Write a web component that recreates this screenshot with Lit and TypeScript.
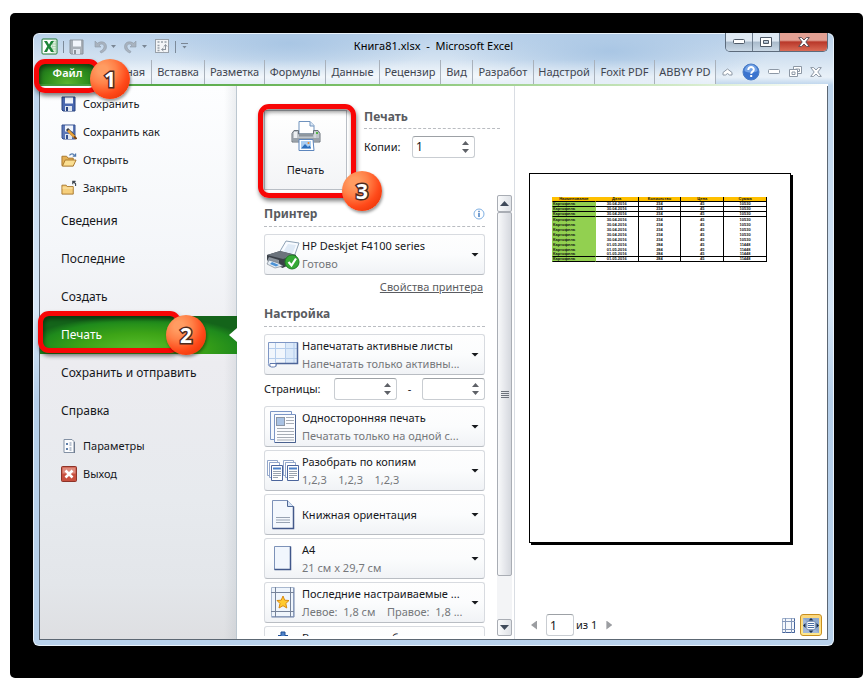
import { LitElement, html, css, svg, nothing } from "lit";
import { customElement, property } from "lit/decorators.js";
import { classMap } from "lit/directives/class-map.js";

const page = (w: number, h: number, inner: unknown) => html`<svg
  width=${w} height=${h} viewBox="0 0 ${w} ${h}" aria-hidden="true">${inner}</svg>`;

const floppy = (dim: string, dark: string) => svg`
  <path d="M1 1h13v14H2l-1-1z" fill=${dim} stroke=${dark}/>
  <rect x="4" y="1.500" width="8" height="6" fill="#f2f6fc"/>
  <rect x="4" y="10" width="7" height="5" fill="#dfe6ef"/>
  <rect x="5" y="11" width="2" height="4" fill=${dark}/>`;

const icons = {
  excel: page(17, 17, svg`
    <rect x="1" y="1" width="15" height="15" rx="1" fill="#fff" stroke="#1e7a35"/>
    <path d="M11 3h4v11h-4z" fill="#dff0df" stroke="#8fc295" stroke-width=".6"/>
    <path d="M11 6h4M11 8.500h4M11 11h4" stroke="#8fc295" stroke-width=".6"/>
    <path d="M3 3h3l2 3.500L10 3h3L9.500 8.300 13 14h-3L7.800 10.300 6 14H3l3.300-5.700z" fill="#1d8538"/>`),
  qSave: page(16, 16, floppy("#a9b0b8", "#8a929b")),
  undo: page(14, 14, svg`<path d="M2 1v6h6L6 5c3-2 5-.6 5 1.600 0 2-1.500 3.600-4 4.800l1 1.600c4-1.500 5.800-4 5.400-7C13 2 8.500.500 4.300 3.300z" fill="#a9b3bf" stroke="#8f9aa7" stroke-width=".6"/>`),
  redo: page(14, 14, svg`<path d="M12 1v6H6l2-2C5 3 3 4.400 3 6.600c0 2 1.500 3.600 4 4.800L6 13C2 11.500.2 9 .6 6 1 2 5.500.500 9.700 3.300z" fill="#a9b3bf" stroke="#8f9aa7" stroke-width=".6"/>`),
  pivot: page(15, 15, svg`
    <rect x=".5" y=".5" width="13" height="13" fill="#f3f5f7" stroke="#98a0a9"/>
    <path d="M2.500 3h2M6 3h2M9.500 3h2M2.500 6.500h2M2.500 9h2M2.500 11.500h2" stroke="#98a0a9" stroke-width="1.500"/>
    <path d="M10.500 10V6M9 7.500 10.500 5.500 12 7.500M7 10.500h4M8.500 9 6.500 10.500 8.500 12" fill="none" stroke="#8c949d"/>`),
  save: page(16, 16, floppy("#4a68b0", "#27427f")),
  saveAs: page(16, 16, svg`${floppy("#5d78b8", "#34508f")}
    <path d="M6 5l7 7" stroke="#2f3742" stroke-width="3"/><path d="M7 6.500l7 7" stroke="#e9a23b" stroke-width="2.500"/><path d="M13 12.500l2.500 2.500" stroke="#7a4412" stroke-width="2"/>`),
  open: page(17, 16, svg`
    <path d="M1 14V4h5l1.500 2H13v8z" fill="#e3b055" stroke="#a8752a"/>
    <path d="M1.500 14.500 4.500 8H16l-3 6.500z" fill="#fbdf92" stroke="#a8752a"/>
    <path d="M9 3c1.500-2 4-2 5.500 0M15.500 1v3h-3" fill="none" stroke="#4d76ab" stroke-width="1.300"/>`),
  close: page(17, 16, svg`
    <path d="M1 14.500V5h4.500l1 1.500H13v8z" fill="#f6cf7c" stroke="#a8752a"/>
    <path d="M1.500 8h11" stroke="#fdeab6"/>
    <path d="M15.500 6V3.500L13 1M12.500 4V1h3" fill="none" stroke="#3d4650" stroke-width="1.200"/>`),
  options: page(16, 16, svg`
    <path d="M3 1.500h8l2 2v11H3z" fill="#fbfcfe" stroke="#8290a3"/><path d="M13.500 4v11" stroke="#6f7d91"/>
    <rect x="5" y="5" width="2" height="2" fill="#5f7ea8"/><rect x="5" y="10" width="2" height="2" fill="#5f7ea8"/>
    <path d="M8.500 5h2M8.500 7h2M8.500 10h2M8.500 12h2" stroke="#7b8ca5"/>`),
  exit: page(16, 16, svg`
    <rect x=".5" y=".5" width="15" height="15" rx="1" fill="#c8503f" stroke="#8d3328"/>
    <rect x="1.500" y="1.500" width="13" height="6" fill="#dd8a7d"/>
    <path d="M4.500 4.500l7 7M11.500 4.500l-7 7" stroke="#fff" stroke-width="2.600"/>`),
  printer: page(32, 32, svg`
    <path d="M9 1.500h11l4 4V14H9z" fill="#fff" stroke="#6f92bd"/><path d="M20 1.500V6h4" fill="#dbe8f6" stroke="#6f92bd"/>
    <path d="M4 10.500h4.500V14h15v-3.500H28l2 3V22H2v-8.500z" fill="#bfc5cb" stroke="#6a727a"/>
    <path d="M4 12h3v8H4z" fill="#eef0f2"/><path d="M24.500 12h1v8h-1z" fill="#e4e7ea"/><path d="M9 14.500h14v2H9z" fill="#8d959d"/>
    <rect x="26" y="12" width="2" height="2" fill="#56b447"/><rect x="2.500" y="18" width="27" height="3" fill="#9aa2aa"/>
    <path d="M9 19.500h14l1 11H9z" fill="#fff" stroke="#5d86bd"/>
    <path d="M11 21h10v7.500H11z" fill="#a9cdf2"/><path d="M11 28.500l4-4.500 3 3 1.500-1.500L21 28v.5z" fill="#2c6fbe"/><circle cx="18.500" cy="23" r="1" fill="#e9862d"/>`),
  device: page(34, 30, svg`
    <path d="M13 13 20 1l13 2-5 14z" fill="#f8fbff" stroke="#8fa2b5"/><path d="M17 12 22 4l8 1-4 10z" fill="#dfeaf6"/>
    <path d="M1 15l13-4 16 4 .5 7-14 6L1 20z" fill="#3b4148"/><path d="M1 15l13-4 16 4-13 4z" fill="#6b737c"/>
    <path d="M3 17l10 3v6L1 21z" fill="#8d959e"/><path d="M3 20l9 3 5 3-8 2-8-4z" fill="#e5edf5" stroke="#69747f" stroke-width=".6"/>
    <path d="M6 22l7 3-3 1.500-6-2.500z" fill="#4b92d6"/>
    <circle cx="26" cy="22" r="7" fill="#35a935" stroke="#1f7f24"/><path d="M22.500 22l3 3.500 4.500-7" fill="none" stroke="#fff" stroke-width="2.200"/>`),
  sheet: page(32, 28, svg`
    <path d="M1.500 1.500h29v21H9v3H4c-2 0-3-1-2.500-3z" fill="#f1f6fc" stroke="#7e96c4"/>
    <path d="M18 2h12v20H18z" fill="#dceafa"/>
    <path d="M8.500 2v20M18.500 2v20M27 2v20M2 7.500h28M2 17.500h28" stroke="#b5cdec"/>
    <path d="M30.500 1.500v21H9" fill="none" stroke="#4d6599" stroke-width="1.500"/>
    <path d="M3 22.500h6v1.500c0 1.500-1 2-2.500 2H4.500C3 26 2.500 24.500 3 22.500z" fill="#fff" stroke="#5f78ad"/>`),
  oneSide: page(28, 34, svg`
    <path d="M1.500 1.500h21v28h-21z" fill="#f6f9fd" stroke="#7c96c5"/>
    <path d="M5.500 4.500h21v28h-21z" fill="#fbfcfe" stroke="#7c96c5"/><path d="M26.500 5v27.500H6" fill="none" stroke="#4b628f"/>
    <rect x="7.500" y="7.500" width="8" height="8" fill="#a9c2e3" stroke="#8a95a5"/>
    <path d="M17 7.500h8M17 10.500h8M17 13.500h8M8 18.500h17M8 21.500h17M8 24.500h17M8 27.500h17M8 30h17" stroke="#a7adb5"/>`),
  collate: page(34, 23, svg`${[0, 16].map((x) => svg`
    <g transform="translate(${x} 0)">
      <path d="M1.500 1.500h10v15h-10z" fill="#fff" stroke="#93a7cb"/><path d="M3 4h7" stroke="#aab"/>
      <path d="M3.500 3.500h10v15h-10z" fill="#fff" stroke="#93a7cb"/>
      <path d="M5.500 6.500h11v15h-11z" fill="#fff" stroke="#4c659c"/>
      <path d="M7 9.500h8" stroke="#4d81c8" stroke-width="2"/><path d="M7 12.500h8M7 14.500h8M7 16.500h8M7 18.500h5" stroke="#9aa3af"/>
    </g>`)}`),
  portrait: page(24, 32, svg`
    <path d="M1.500 1.500h15l6 6v22h-21z" fill="#f4f8fd" stroke="#7d92b8"/><path d="M16.500 1.500v6h6" fill="#d5e3f5" stroke="#4f6896"/>
    <path d="M22.500 7.500V29.500h-21" fill="none" stroke="#43598a" stroke-width="1.500"/>
    <path d="M5 18.500h14M5 21h14M5 23.500h14" stroke="#98a3b2"/>`),
  a4: page(20, 28, svg`<path d="M1.500 1.500h16v23h-16z" fill="#f1f6fd" stroke="#7d92b8"/><path d="M17.500 1.500v23h-16" fill="none" stroke="#41578a" stroke-width="1.500"/>`),
  margins: page(26, 33, svg`
    <path d="M1.500 1.500h22v29h-22z" fill="#eff5fc" stroke="#a9b8cf"/><path d="M24 1.500v29.500H1.500" fill="none" stroke="#6c81a8"/>
    <path d="M5.500 1v30M20.500 1v30M1 6.500h23M1 25.500h23" stroke="#76839a"/>
    <path d="M13 10l1.700 4.200 4.300.3-3.200 3 1 4.500-3.800-2.300L9 22l1-4.500-3-3 4.200-.3z" fill="#ffca2e" stroke="#d98a12"/>`),
  scale: page(26, 32, svg`<path d="M13 9 8 4.500h3V1h4v3.500h3z" fill="#4d82c9" stroke="#1f4f95"/><path d="M3.500 10.500h20v19h-20z" fill="#f4f8fd" stroke="#7d92b8"/>`),
  info: page(12, 12, svg`<circle cx="6" cy="6" r="5" fill="#fff" stroke="#7fb0e3"/><path d="M6 5v4M6 2.800v1.400" stroke="#2b6cb8" stroke-width="1.300"/>`),
  help: page(18, 18, svg`<circle cx="9" cy="9" r="8" fill="#3b74cf" stroke="#4a7cc4"/><path d="M2.500 8a6.500 6.500 0 0 1 13 0c-4 2-9 2-13 0z" fill="#74a3e6"/>
    <path d="M6.300 7c0-4 5.700-3.600 5.500-.3-.1 1.700-2.600 1.900-2.600 4M9.200 12v2" fill="none" stroke="#fff" stroke-width="2"/>`),
  collapse: page(11, 8, svg`<path d="M1 4.500 5.500 1 10 4.500V7H7.500L5.500 5.500 3.500 7H1z" fill="#fff" stroke="#8d98a5"/>`),
  mdiMin: page(12, 6, svg`<rect x=".5" y=".5" width="11" height="4" rx="1" fill="#fff" stroke="#8d98a5"/>`),
  mdiRestore: page(13, 12, svg`<path d="M4.500.500h8v7h-8z" fill="#fff" stroke="#8d98a5"/><path d="M6.500 3h4v2.500h-4z" fill="none" stroke="#8d98a5"/><path d="M.5 3.500h8v7h-8z" fill="#fff" stroke="#8d98a5"/><path d="M3 6h3v2.500H3z" fill="none" stroke="#8d98a5"/>`),
  mdiClose: page(12, 10, svg`<path d="M.7.600h3L6 3 8.300.600h3L7.800 5l3.500 4.400h-3L6 7 3.700 9.400h-3L4.200 5z" fill="#fff" stroke="#8d98a5"/>`),
  min: page(12, 6, svg`<rect x=".5" y=".5" width="11" height="4" rx="1" fill="#fff" stroke="#4f5a68"/>`),
  max: page(12, 10, svg`<path fill-rule="evenodd" d="M.5.500h11v9H.5zM3.500 3.500h5v3h-5z" fill="#fff" stroke="#4f5a68"/>`),
  x: page(12, 10, svg`<path d="M.7.600h3L6 3 8.300.600h3L7.800 5l3.500 4.400h-3L6 7 3.700 9.400h-3L4.200 5z" fill="#fff" stroke="#5b4a52"/>`),
  showMargins: page(13, 15, svg`<path d="M.5.500h12v14H.5z" fill="#f5f8fc" stroke="#9fb0cb"/><path d="M12.500.500v14H.5" fill="none" stroke="#44639b"/><path d="M3.500 0v15M9.500 0v15M0 3.500h13M0 11.500h13" stroke="#8397ba"/>`),
  zoomPage: page(16, 15, svg`<rect width="16" height="15" fill="#a3b8d8"/><path d="M0 0h16v15" fill="#7d9cc9" opacity=".6"/><path d="M4 3.500h8v8H4z" fill="#fff" stroke="#5b76a3" stroke-width=".6"/><path d="M5 5.500h6M5 7.500h6M5 9.500h6" stroke="#4a6ea5"/>
    <path d="M8 0l2.500 2.500h-5zM8 15l2.500-2.500h-5zM0 7.500 2.500 5v5zM16 7.500 13.500 5v5z" fill="#1d2f4d"/>`),
};

const shared = css`
  * { box-sizing: border-box; }
  button, input { font: inherit; color: inherit; margin: 0; }
  button { padding: 0; border: 0; background: none; text-align: left; white-space: nowrap; }
  svg { display: block; flex: none; }
`;

@customElement("step-mark")
class StepMark extends LitElement {
  @property() step = "";
  static styles = css`
    :host {
      display: block;
      position: absolute;
      z-index: 3;
      border: 5px solid #f80606;
      border-radius: 11px;
      box-shadow: 1px 3px 4px rgba(0, 0, 0, 0.5), inset 1px 3px 4px rgba(0, 0, 0, 0.45);
      pointer-events: none;
    }
    .badge {
      position: absolute;
      right: var(--badge-right, -30px);
      bottom: var(--badge-bottom, -8px);
      display: grid;
      place-items: center;
      width: 40px;
      height: 40px;
      border-radius: 50%;
      background: radial-gradient(circle at 32% 28%, #ff9c62 0 12%, #ff8148 34%, #ff4a1a 62%, #f03a0c 80%, #b52a0a 100%);
      box-shadow: 1px 2px 3px rgba(0, 0, 0, 0.4);
      font: 700 21px/40px "Open Sans", "Noto Sans", sans-serif;
      color: #fff;
      -webkit-text-stroke: 3px #4c2a20;
      paint-order: stroke fill;
    }
  `;
  render() {
    return html`<span class="badge">${this.step}</span>`;
  }
}

@customElement("spin-box")
class SpinBox extends LitElement {
  @property() value = "";
  @property() name = "";
  static styles = [shared, css`
    :host { display: flex; width: 63px; height: 22px; border: 1px solid #c9cdd2; border-top-color: #9da1a6; border-radius: 3px; background: #fff; }
    input { flex: 1; min-width: 0; border: 0; outline: 0; padding: 0 3px; background: none; font-size: 12px; }
    .arrows { display: grid; width: 17px; place-items: center; padding: 2px 0; }
    .up, .down { width: 7px; height: 4px; background: #5e6167; clip-path: polygon(0 100%, 50% 0, 100% 100%); }
    .down { clip-path: polygon(0 0, 50% 100%, 100% 0); }
  `];
  render() {
    return html`<input type="text" aria-label=${this.name} .value=${this.value} />
      <span class="arrows"><button class="up" aria-label="Больше"></button><button class="down" aria-label="Меньше"></button></span>`;
  }
}

@customElement("setting-box")
class SettingBox extends LitElement {
  @property() label = "";
  @property() detail = "";
  @property({ attribute: false }) icon: unknown = nothing;
  static styles = [shared, css`
    :host { display: block; }
    .box {
      display: grid;
      grid-template-columns: 36px 1fr 18px;
      align-items: center;
      width: 100%;
      height: 41px;
      border: 1px solid #d8dbe0;
      border-bottom-color: #b9bdc3;
      border-radius: 3px;
      background: linear-gradient(#fefefe, #fbfcfd 50%, #f1f3f6);
    }
    .pic { display: grid; place-items: center; }
    .text { padding-left: 1px; line-height: 18px; }
    .label, .detail { display: block; white-space: pre; }
    .label { color: #16181c; }
    .detail { color: #75777b; }
    .arrow { width: 8px; height: 4px; margin-left: 5px; background: #16181c; clip-path: polygon(0 0, 50% 100%, 100% 0); }
  `];
  render() {
    return html`<button class="box" aria-haspopup="listbox">
      <span class="pic">${this.icon}</span>
      <span class="text"><span class="label">${this.label}</span>${this.detail ? html`<span class="detail">${this.detail}</span>` : nothing}</span>
      <span class="arrow"></span>
    </button>`;
  }
}

@customElement("sheet-preview")
class SheetPreview extends LitElement {
  static styles = css`
    :host { display: block; }
    .paper { aspect-ratio: 262 / 370; box-sizing: border-box; border: 1px solid #000; background: #fff; box-shadow: 2px 2px 0 #000; padding: 23px 23px 0 22px; }
    table { width: 100%; table-layout: fixed; border-collapse: separate; border-spacing: 0; border-right: 1px solid #000; font: 700 4px/4px "Liberation Sans", sans-serif; text-align: center; color: #111; }
    th, td { height: 5px; box-sizing: border-box; padding: 0; overflow: hidden; white-space: nowrap; border-left: 1px solid #000; }
    th { background: #ffc000; border-bottom: 1px solid #000; }
    th:first-child, th:nth-child(2) { border-left-color: #ffc000; }
    td:first-child { background: #92d050; border-left-color: #92d050; text-align: left; }
    td:nth-child(2) { border-left-color: #92d050; }
    .ruled td { height: 5px; border-bottom: 1px solid #000; }
  `;
  private rows = Array.from({ length: 12 }, (_, i) => ({
    date: i < 8 ? "30.04.2016" : "01.05.2016",
    count: i < 8 ? "234" : "284",
    sum: i < 8 ? "10530" : "11448",
    ruled: i < 3 || i > 9,
  }));
  render() {
    return html`<div class="paper"><table>
      <thead><tr>${["Наименование", "Дата", "Количество", "Цена", "Сумма"].map((h) => html`<th>${h}</th>`)}</tr></thead>
      <tbody>${this.rows.map((r) => html`<tr class=${classMap({ ruled: r.ruled })}>
        <td>Картофель</td><td>${r.date}</td><td>${r.count}</td><td>45</td><td>${r.sum}</td></tr>`)}</tbody>
    </table></div>`;
  }
}

@customElement("app-root")
class AppRoot extends LitElement {
  static styles = [shared, css`
    :host {
      display: flex;
      box-sizing: border-box;
      height: 100vh;
      padding: 13px 4px 1px 10px;
      background: #fff;
      font: 11px/18px "Noto Sans", "Open Sans", sans-serif;
      color: #16181c;
    }
    .desk { flex: 1; display: flex; min-width: 0; padding: 20px 29px 32px 23px; border-radius: 5px; background: #000; }
    .window {
      flex: 1;
      display: flex;
      flex-direction: column;
      min-width: 0;
      padding: 0 6px 6px;
      border-radius: 6px;
      background:
        radial-gradient(ellipse 20% 40px at 72% 18px, #a9c6e4, transparent),
        radial-gradient(ellipse 18% 36px at 32% 10px, #a9c6e4, transparent),
        linear-gradient(#b9d1ea, #d3e2f1 26px, #e9f1f8 44px, #bcd4ec 52px, #d6e6f6 45%, #b4cee9 60%, #b9d2ec);
      box-shadow: inset 0 0 0 1px #eaf3fb;
    }
    .titlebar { display: grid; grid-template-columns: 1fr auto 1fr; align-items: start; height: 27px; }
    .quick { display: flex; align-items: center; height: 27px; padding-left: 2px; }
    .quick .sep { width: 1px; height: 12px; margin: 0 5px; background: #7d8b9a; }
    .quick .pair { display: flex; align-items: center; gap: 4px; margin-left: 8px; }
    .caret { width: 5px; height: 3px; background: #7a8694; clip-path: polygon(0 0, 50% 100%, 100% 0); }
    .custom { width: 7px; height: 8px; border-top: 1px solid #7a8694; display: grid; place-items: center; }
    .title { margin: 0; font-size: 11px; font-weight: 400; line-height: 26px; color: #000; }
    .controls { display: flex; justify-self: end; border: 1px solid #5c6b7c; border-top: 0; border-radius: 0 0 5px 5px; overflow: hidden; }
    .controls button { display: grid; place-items: center; width: 27px; height: 18px; background: linear-gradient(#dfe9f3 45%, #a9bacb 50%, #c9d8e6); border-right: 1px solid #6c7b8c; }
    .controls .shut { width: 47px; border: 0; background: linear-gradient(#e2a093 40%, #b9382a 50%, #d96a55); }

    .ribbon { display: grid; grid-template-columns: 57fr 56fr 53fr 60fr 61fr 54fr 61fr 32fr 61fr 61fr 60fr 61fr 112fr; height: 24px; color: #3f4550; }
    .tab { height: 24px; border-right: 1px solid #a9b1bb; background: linear-gradient(transparent, rgba(255, 255, 255, 0.6)); text-align: center; line-height: 24px; }
    .filewrap { position: relative; display: grid; padding-top: 2px; }
    .file { color: #fff; font-weight: 600; text-align: center; line-height: 18px; background: radial-gradient(ellipse at 50% 100%, #5cb62f, #2c8c1d 55%, #14601a); }
    .filewrap step-mark { inset: -1px -4px -9px -5px; --badge-right: -35px; --badge-bottom: -11px; }
    .mdi { display: flex; align-items: center; justify-content: space-between; padding: 0 6px 0 6px; }

    .body { flex: 1; min-height: 0; display: grid; grid-template-columns: 197px 278px 1fr; border: 1px solid #5c6773; border-top: 0; background: #fff; }
    .rule { height: 2px; background: linear-gradient(90deg, #3f9a35, #7cc069 40%, #cfe8c4 80%, #fff); }

    .nav { position: relative; z-index: 1; padding-top: 4px; border-right: 1px solid #bcc7d0; background: linear-gradient(90deg, transparent 94%, rgba(140, 150, 160, 0.15)), linear-gradient(#fdfeff, #f4f6f9 30%, #ececf0 50%, #e7eaee 75%, #e3e6ea 90%, #dedfe2); }
    .nav button { display: flex; align-items: center; width: 100%; padding-left: 21px; }
    .small { height: 28px; gap: 6px; }
    .small svg { width: 16px; }
    .big { height: 38px; font-size: 12px; }
    .group { padding-bottom: 2px; }
    .current { position: relative; }
    .nav .current .big { color: #fff; background: radial-gradient(ellipse 60% 90% at 50% 90%, #5cc02c, #3da417 50%, #1f8a1c 85%, #14641a); width: calc(100% + 1px); }
    .current::after { content: ""; position: absolute; right: -1px; top: 12px; width: 8px; height: 14px; background: #fff; clip-path: polygon(100% 0, 100% 100%, 0 50%); }
    .current step-mark { inset: -5px 55px 1px -2px; --badge-right: -30px; --badge-bottom: -7px; }

    .print { display: flex; flex-direction: column; min-height: 0; padding: 24px 2px 3px 27px; border-right: 1px solid #d9dde3; }
    .head { display: flex; gap: 17px; height: 85px; flex: none; }
    .go { position: relative; width: 83px; height: 80px; border: 1px solid #b9bec5; background: linear-gradient(#fff, #f3f4f6); display: flex; flex-direction: column; align-items: center; padding-top: 9px; gap: 9px; }
    .go step-mark { inset: -7px -10px -9px -7px; --badge-right: -31px; --badge-bottom: -18px; }
    .copies { flex: 1; margin-right: 12px; }
    .copies h2, .opts h2 { margin: 0; font-size: 12px; font-weight: 700; color: #595b60; border-bottom: 1px dashed #b9bcc1; }
    .copies h2 { line-height: 14px; padding-bottom: 4px; }
    .copies .row { display: grid; grid-template-columns: 48px auto; justify-content: start; align-items: center; margin-top: 7px; }
    .scroll { flex: 1; min-height: 0; display: flex; gap: 12px; }
    .opts { flex: 1; min-width: 0; overflow: hidden; }
    .opts h2 { display: flex; align-items: center; justify-content: space-between; margin: 9px 0 7px; padding-bottom: 3px; }
    .opts h2:first-child { margin-top: 10px; }
    .link { display: block; margin-top: 3px; padding-right: 2px; text-align: right; color: #5a5c61; }
    .range { display: grid; grid-template-columns: 70px 63px 1fr 63px; align-items: center; margin: 3px 0 6px; }
    .dash { text-align: center; }
    .stack { display: grid; gap: 3px; }
    .bar { display: flex; flex-direction: column; width: 15px; background: #f3f4f6; }
    .bar button { display: grid; place-items: center; height: 17px; border: 1px solid #a9adb4; border-radius: 2px; background: linear-gradient(90deg, #fafbfc, #dfe2e7); }
    .bar i { width: 9px; height: 5px; background: #3f4a5a; clip-path: polygon(0 100%, 50% 0, 100% 100%); }
    .bar .dn i { clip-path: polygon(0 0, 50% 100%, 100% 0); }
    .thumb { flex: 364; display: grid; place-items: center; border: 1px solid #a9adb4; border-radius: 2px; background: linear-gradient(90deg, #f8f9fa, #e3e5ea 60%, #d5d8de); }
    .grip { width: 8px; height: 7px; background: repeating-linear-gradient(#6d737c 0 1px, transparent 1px 2px); }
    .space { flex: 43; }

    .preview { display: flex; flex-direction: column; justify-content: space-between; min-height: 0; padding: 87px 5px 3px 14px; }
    .preview sheet-preview { margin-right: 31px; }
    .foot { display: flex; align-items: center; height: 22px; }
    .turn { width: 6px; height: 9px; background: #9b9da1; clip-path: polygon(0 50%, 100% 0, 100% 100%); margin-left: 2px; }
    .turn.next { clip-path: polygon(100% 50%, 0 0, 0 100%); margin-left: 9px; }
    .num { width: 28px; height: 22px; margin: 0 2px 0 9px; padding: 0 3px; border: 1px solid #c9cdd2; border-top-color: #9da1a6; border-radius: 3px; outline: 0; font-size: 12px; }
    .view { margin-left: auto; }
    .fit { display: grid; place-items: center; width: 22px; height: 22px; margin-left: 5px; border: 1px solid #c98f1f; border-radius: 3px; background: linear-gradient(#fbd67c, #ffe98f); }
  `];

  private tabs = ["Главная", "Вставка", "Разметка", "Формулы", "Данные", "Рецензир", "Вид", "Разработ", "Надстрой", "Foxit PDF", "ABBYY PD"];
  private fileItems: [string, unknown][] = [["Сохранить", icons.save], ["Сохранить как", icons.saveAs], ["Открыть", icons.open], ["Закрыть", icons.close]];
  private sections = ["Сведения", "Последние", "Создать", "Печать", "Сохранить и отправить", "Справка"];
  private tailItems: [string, unknown][] = [["Параметры", icons.options], ["Выход", icons.exit]];
  private layout: [string, string, unknown][] = [
    ["Односторонняя печать", "Печатать только на одной с...", icons.oneSide],
    ["Разобрать по копиям", "1,2,3    1,2,3    1,2,3", icons.collate],
    ["Книжная ориентация", "", icons.portrait],
    ["A4", "21 см x 29,7 см", icons.a4],
    ["Последние настраиваемые ...", "Левое:  1,8 см    Правое:  1,8 ...", icons.margins],
    ["Вписать все столбцы", "Уменьшить масштаб", icons.scale],
  ];

  private small([label, icon]: [string, unknown]) {
    return html`<button class="small">${icon}<span>${label}</span></button>`;
  }

  render() {
    return html`<div class="desk"><div class="window">
      <header class="titlebar">
        <div class="quick">
          ${icons.excel}<span class="sep"></span><button aria-label="Сохранить">${icons.qSave}</button>
          <button class="pair" aria-label="Отменить">${icons.undo}<span class="caret"></span></button>
          <button class="pair" aria-label="Вернуть">${icons.redo}<span class="caret"></span></button>
          <button class="pair" aria-label="Сводная таблица">${icons.pivot}</button>
          <span class="sep"></span><button class="custom" aria-label="Настройка панели"><span class="caret"></span></button>
        </div>
        <h1 class="title">Книга81.xlsx &nbsp;- &nbsp;Microsoft Excel</h1>
        <div class="controls">
          <button aria-label="Свернуть">${icons.min}</button><button aria-label="Развернуть">${icons.max}</button><button class="shut" aria-label="Закрыть окно">${icons.x}</button>
        </div>
      </header>
      <nav class="ribbon">
        <div class="filewrap"><button class="file">Файл</button><step-mark step="1"></step-mark></div>
        ${this.tabs.map((t) => html`<button class="tab">${t}</button>`)}
        <div class="mdi">
          <button aria-label="Свернуть ленту">${icons.collapse}</button><button aria-label="Справка">${icons.help}</button>
          <button aria-label="Свернуть книгу">${icons.mdiMin}</button><button aria-label="Восстановить книгу">${icons.mdiRestore}</button>
          <button aria-label="Закрыть книгу">${icons.mdiClose}</button>
        </div>
      </nav>
      <div class="rule"></div>
      <main class="body">
        <nav class="nav">
          ${this.fileItems.map((i) => this.small(i))}
          <div class="group">
            ${this.sections.map((s) => s === "Печать"
              ? html`<div class="current"><button class="big" aria-current="page">${s}</button><step-mark step="2"></step-mark></div>`
              : html`<button class="big">${s}</button>`)}
          </div>
          ${this.tailItems.map((i) => this.small(i))}
        </nav>
        <section class="print">
          <div class="head">
            <button class="go">${icons.printer}<span>Печать</span><step-mark step="3"></step-mark></button>
            <div class="copies">
              <h2>Печать</h2>
              <div class="row"><span>Копии:</span><spin-box name="Копии" value="1"></spin-box></div>
            </div>
          </div>
          <div class="scroll">
            <div class="opts">
              <h2>Принтер ${icons.info}</h2>
              <setting-box label="HP Deskjet F4100 series" detail="Готово" .icon=${icons.device}></setting-box>
              <a class="link" href="#printer">Свойства принтера</a>
              <h2>Настройка</h2>
              <setting-box label="Напечатать активные листы" detail="Напечатать только активны..." .icon=${icons.sheet}></setting-box>
              <div class="range"><span>Страницы:</span><spin-box name="Страницы с"></spin-box><span class="dash">-</span><spin-box name="Страницы по"></spin-box></div>
              <div class="stack">${this.layout.map(([l, d, i]) => html`<setting-box label=${l} detail=${d} .icon=${i}></setting-box>`)}</div>
            </div>
            <div class="bar">
              <button aria-label="Вверх"><i></i></button>
              <div class="thumb"><span class="grip"></span></div>
              <div class="space"></div>
              <button class="dn" aria-label="Вниз"><i></i></button>
            </div>
          </div>
        </section>
        <section class="preview">
          <sheet-preview></sheet-preview>
          <div class="foot">
            <button class="turn" aria-label="Предыдущая страница"></button>
            <input class="num" type="text" aria-label="Страница" value="1" /><span>из 1</span>
            <button class="turn next" aria-label="Следующая страница"></button>
            <button class="view" aria-label="Показать поля">${icons.showMargins}</button>
            <button class="fit" aria-label="По размеру страницы">${icons.zoomPage}</button>
          </div>
        </section>
      </main>
    </div></div>`;
  }
}
